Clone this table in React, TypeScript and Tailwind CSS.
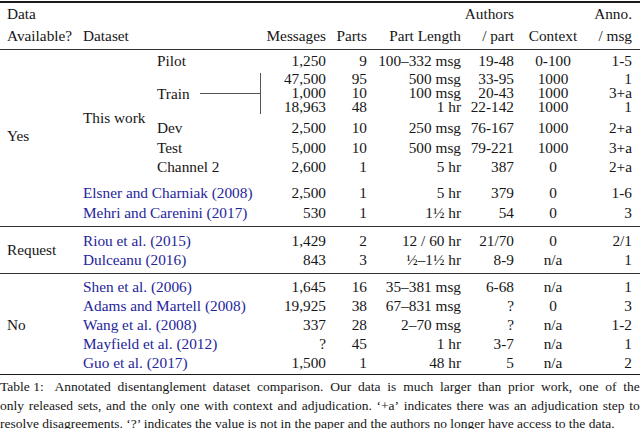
import React from 'react';

type Nums = [string, string, string, string, string, string];

// column boxes: width + padding + alignment
const COLS = [
  'w-[77px] pl-[7px] justify-start',
  'w-[74px] pl-[6px] justify-start',
  'w-[110px] pl-[6px] justify-start',
  'w-[71px] pr-[6px] justify-end',
  'w-[41px] pr-[6px] justify-end',
  'w-[94px] pr-[6px] justify-end',
  'w-[53px] pr-[6px] justify-end',
  'w-[66px] justify-center',
  'w-[54px] pr-[8px] justify-end',
];

function Cell({ col, children }: { col: number; children?: React.ReactNode }) {
  return <div className={`flex shrink-0 whitespace-nowrap ${COLS[col]}`}>{children}</div>;
}

function NumCells({ v }: { v: Nums }) {
  return (
    <>
      {v.map((x, i) => (
        <Cell key={i} col={i + 3}>
          {x}
        </Cell>
      ))}
    </>
  );
}

function SubRow({ name, v, h }: { name: string; v: Nums; h: string }) {
  return (
    <div className={`flex items-center ${h}`}>
      <Cell col={2}>{name}</Cell>
      <NumCells v={v} />
    </div>
  );
}

function CiteRow({ name, year, v }: { name: string; year: string; v: Nums }) {
  return (
    <div className="flex h-[19px] items-center">
      <div className="w-[184px] shrink-0 whitespace-nowrap pl-[6px] text-[#25259b]">
        {name} ({year})
      </div>
      <NumCells v={v} />
    </div>
  );
}

const train: Nums[] = [
  ['47,500', '95', '500 msg', '33-95', '1000', '1'],
  ['1,000', '10', '100 msg', '20-43', '1000', '3+a'],
  ['18,963', '48', '1 hr', '22-142', '1000', '1'],
];

const requestRows: [string, string, Nums][] = [
  ['Riou et al.', '2015', ['1,429', '2', '12 / 60 hr', '21/70', '0', '2/1']],
  ['Dulceanu', '2016', ['843', '3', '½–1½ hr', '8-9', 'n/a', '1']],
];

const noRows: [string, string, Nums][] = [
  ['Shen et al.', '2006', ['1,645', '16', '35–381 msg', '6-68', 'n/a', '1']],
  ['Adams and Martell', '2008', ['19,925', '38', '67–831 msg', '?', '0', '3']],
  ['Wang et al.', '2008', ['337', '28', '2–70 msg', '?', 'n/a', '1-2']],
  ['Mayfield et al.', '2012', ['?', '45', '1 hr', '3-7', 'n/a', '1']],
  ['Guo et al.', '2017', ['1,500', '1', '48 hr', '5', 'n/a', '2']],
];

const captionLines = [
  'Annotated disentanglement dataset comparison. Our data is much larger than prior work, one of the',
  'only released sets, and the only one with context and adjudication. ‘+a’ indicates there was an adjudication step to',
];

function JustifiedLine({ text, lead }: { text: string; lead?: string }) {
  return (
    <div className="flex h-[18.5px] items-center justify-between whitespace-nowrap">
      {lead && <span className="mr-[4px]">{lead}</span>}
      {text.split(' ').map((w, i) => (
        <span key={i}>{w}</span>
      ))}
    </div>
  );
}

export default function App() {
  return (
    <div className="h-[429px] w-[640px] overflow-hidden bg-white pt-[1px] font-['Liberation_Serif',serif] text-[#161616]">
      <div className="text-[15.3px] leading-[19px]">
        <div className="h-[1.5px] bg-[#1a1a1a]" />

        {/* Header */}
        <div className="flex h-[22px] items-center">
          <Cell col={0}>Data</Cell>
          <Cell col={1} />
          <Cell col={2} />
          <Cell col={3} />
          <Cell col={4} />
          <Cell col={5} />
          <Cell col={6}>Authors</Cell>
          <Cell col={7} />
          <Cell col={8}>Anno.</Cell>
        </div>
        <div className="flex h-[22px] items-center">
          <Cell col={0}>Available?</Cell>
          <Cell col={1}>Dataset</Cell>
          <Cell col={2} />
          <Cell col={3}>Messages</Cell>
          <Cell col={4}>Parts</Cell>
          <Cell col={5}>Part Length</Cell>
          <Cell col={6}>/ part</Cell>
          <Cell col={7}>Context</Cell>
          <Cell col={8}>/ msg</Cell>
        </div>
        <div className="mt-[2px] h-px bg-[#333]" />

        {/* Yes */}
        <div className="flex pb-[4px]">
          <div className="flex w-[77px] shrink-0 items-center pl-[7px]">Yes</div>
          <div className="flex flex-col">
            <div className="flex">
              <div className="w-[74px] shrink-0 whitespace-nowrap pl-[6px] pt-[58px]">This work</div>
              <div className="flex flex-col">
                <SubRow name="Pilot" h="h-[22px]" v={['1,250', '9', '100–332 msg', '19-48', '0-100', '1-5']} />
                {/* Train split into three tight lines, joined by a bracket line */}
                <div className="flex h-[46px] items-start">
                  <div className="mt-[1px] flex h-[41px] w-[110px] shrink-0 items-center border-r border-[#555] pl-[6px]">
                    <span>Train</span>
                    <div className="ml-[10px] h-px flex-1 bg-[#555]" />
                  </div>
                  <div className="flex flex-col leading-[14px]">
                    {train.map((v, i) => (
                      <div key={i} className="flex h-[14px] items-center">
                        <NumCells v={v} />
                      </div>
                    ))}
                  </div>
                </div>
                <SubRow name="Dev" h="h-[20px]" v={['2,500', '10', '250 msg', '76-167', '1000', '2+a']} />
                <SubRow name="Test" h="h-[19px]" v={['5,000', '10', '500 msg', '79-221', '1000', '3+a']} />
                <SubRow name="Channel 2" h="h-[19px]" v={['2,600', '1', '5 hr', '387', '0', '2+a']} />
              </div>
            </div>
            <div className="h-[7px]" />
            <CiteRow name="Elsner and Charniak" year="2008" v={['2,500', '1', '5 hr', '379', '0', '1-6']} />
            <div className="h-px" />
            <CiteRow name="Mehri and Carenini" year="2017" v={['530', '1', '1½ hr', '54', '0', '3']} />
          </div>
        </div>
        <div className="h-px bg-[#333]" />

        {/* Request */}
        <div className="flex py-[4px]">
          <div className="flex w-[77px] shrink-0 items-center pl-[7px]">Request</div>
          <div className="flex flex-col">
            {requestRows.map(([n, y, v]) => (
              <CiteRow key={n} name={n} year={y} v={v} />
            ))}
          </div>
        </div>
        <div className="h-px bg-[#333]" />

        {/* No */}
        <div className="flex pb-[2px] pt-[3px]">
          <div className="flex w-[77px] shrink-0 items-center pl-[7px]">No</div>
          <div className="flex flex-col">
            {noRows.map(([n, y, v]) => (
              <CiteRow key={n} name={n} year={y} v={v} />
            ))}
          </div>
        </div>
        <div className="h-[1.5px] bg-[#1a1a1a]" />
      </div>

      {/* Caption */}
      <div className="pt-[3px] text-[13.5px] leading-[18.5px]">
        <JustifiedLine lead="Table 1:" text={captionLines[0]} />
        <JustifiedLine text={captionLines[1]} />
        <div className="flex h-[18.5px] items-center whitespace-nowrap">
          resolve disagreements. ‘?’ indicates the value is not in the paper and the authors no longer have access to the data.
        </div>
      </div>
    </div>
  );
}
